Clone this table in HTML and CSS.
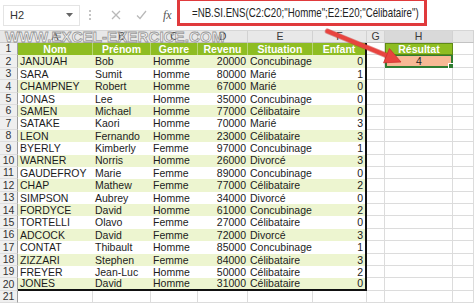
FILE: index.html
```html
<!DOCTYPE html>
<html lang="fr">
<head>
<meta charset="utf-8">
<title>NB.SI.ENS</title>
<link rel="stylesheet" href="styles.css">
</head>
<body>
<div class="app">
  <div class="fbar">
    <div class="namebox"><span class="nb-text">H2</span>
      <svg class="dd" width="7" height="4" viewBox="0 0 7 4"><path d="M0 0 H7 L3.5 4 Z" fill="#666"/></svg>
    </div>
    <div class="dots"><i></i><i></i><i></i></div>
    <div class="btns">
      <svg class="ico" width="10" height="10" viewBox="0 0 10 10"><path d="M1 1 L9 9 M9 1 L1 9" stroke="#b9b9b9" stroke-width="1.3" fill="none"/></svg>
      <svg class="ico" width="11" height="10" viewBox="0 0 11 10"><path d="M1 5.5 L4 8.5 L10 1" stroke="#b9b9b9" stroke-width="1.3" fill="none"/></svg>
      <span class="fx">fx</span>
    </div>
    <div class="formula"><span class="ftext">=NB.SI.ENS(C2:C20;"Homme";E2:E20;"Célibataire")</span></div>
  </div>

  <div class="sheet">
    <div class="row"><div class="corner"></div><div class="ch">A</div><div class="ch">B</div><div class="ch">C</div><div class="ch">D</div><div class="ch">E</div><div class="ch">F</div><div class="ch">G</div><div class="ch selh">H</div><div class="ch"></div></div>
    <div class="row head"><div class="n">1</div><div class="h">Nom</div><div class="h">Prénom</div><div class="h">Genre</div><div class="h">Revenu</div><div class="h">Situation</div><div class="h last">Enfant</div><div class="g"></div><div class="res">Résultat</div><div class="g"></div></div>
    <div class="row alt"><div class="n">2</div><div class="d">JANJUAH</div><div class="d">Bob</div><div class="d">Homme</div><div class="d num">20000</div><div class="d">Concubinage</div><div class="d num last">0</div><div class="g"></div><div class="sel">4<span class="handle"></span></div><div class="g"></div></div>
    <div class="row"><div class="n">3</div><div class="d">SARA</div><div class="d">Sumit</div><div class="d">Homme</div><div class="d num">80000</div><div class="d">Marié</div><div class="d num last">1</div><div class="g"></div><div class="g"></div><div class="g"></div></div>
    <div class="row alt"><div class="n">4</div><div class="d">CHAMPNEY</div><div class="d">Robert</div><div class="d">Homme</div><div class="d num">67000</div><div class="d">Marié</div><div class="d num last">0</div><div class="g"></div><div class="g"></div><div class="g"></div></div>
    <div class="row"><div class="n">5</div><div class="d">JONAS</div><div class="d">Lee</div><div class="d">Homme</div><div class="d num">35000</div><div class="d">Concubinage</div><div class="d num last">0</div><div class="g"></div><div class="g"></div><div class="g"></div></div>
    <div class="row alt"><div class="n">6</div><div class="d">SAMEN</div><div class="d">Michael</div><div class="d">Homme</div><div class="d num">77000</div><div class="d">Célibataire</div><div class="d num last">0</div><div class="g"></div><div class="g"></div><div class="g"></div></div>
    <div class="row"><div class="n">7</div><div class="d">SATAKE</div><div class="d">Kaori</div><div class="d">Homme</div><div class="d num">70000</div><div class="d">Marié</div><div class="d num last">3</div><div class="g"></div><div class="g"></div><div class="g"></div></div>
    <div class="row alt"><div class="n">8</div><div class="d">LEON</div><div class="d">Fernando</div><div class="d">Homme</div><div class="d num">23000</div><div class="d">Célibataire</div><div class="d num last">3</div><div class="g"></div><div class="g"></div><div class="g"></div></div>
    <div class="row"><div class="n">9</div><div class="d">BYERLY</div><div class="d">Kimberly</div><div class="d">Femme</div><div class="d num">97000</div><div class="d">Concubinage</div><div class="d num last">1</div><div class="g"></div><div class="g"></div><div class="g"></div></div>
    <div class="row alt"><div class="n">10</div><div class="d">WARNER</div><div class="d">Norris</div><div class="d">Homme</div><div class="d num">26000</div><div class="d">Divorcé</div><div class="d num last">3</div><div class="g"></div><div class="g"></div><div class="g"></div></div>
    <div class="row"><div class="n">11</div><div class="d">GAUDEFROY</div><div class="d">Marie</div><div class="d">Femme</div><div class="d num">89000</div><div class="d">Concubinage</div><div class="d num last">0</div><div class="g"></div><div class="g"></div><div class="g"></div></div>
    <div class="row alt"><div class="n">12</div><div class="d">CHAP</div><div class="d">Mathew</div><div class="d">Femme</div><div class="d num">77000</div><div class="d">Célibataire</div><div class="d num last">2</div><div class="g"></div><div class="g"></div><div class="g"></div></div>
    <div class="row"><div class="n">13</div><div class="d">SIMPSON</div><div class="d">Aubrey</div><div class="d">Homme</div><div class="d num">34000</div><div class="d">Divorcé</div><div class="d num last">0</div><div class="g"></div><div class="g"></div><div class="g"></div></div>
    <div class="row alt"><div class="n">14</div><div class="d">FORDYCE</div><div class="d">David</div><div class="d">Homme</div><div class="d num">61000</div><div class="d">Concubinage</div><div class="d num last">2</div><div class="g"></div><div class="g"></div><div class="g"></div></div>
    <div class="row"><div class="n">15</div><div class="d">TORTELLI</div><div class="d">Olavo</div><div class="d">Femme</div><div class="d num">27000</div><div class="d">Célibataire</div><div class="d num last">0</div><div class="g"></div><div class="g"></div><div class="g"></div></div>
    <div class="row alt"><div class="n">16</div><div class="d">ADCOCK</div><div class="d">David</div><div class="d">Femme</div><div class="d num">72000</div><div class="d">Divorcé</div><div class="d num last">3</div><div class="g"></div><div class="g"></div><div class="g"></div></div>
    <div class="row"><div class="n">17</div><div class="d">CONTAT</div><div class="d">Thibault</div><div class="d">Homme</div><div class="d num">85000</div><div class="d">Concubinage</div><div class="d num last">1</div><div class="g"></div><div class="g"></div><div class="g"></div></div>
    <div class="row alt"><div class="n">18</div><div class="d">ZIZZARI</div><div class="d">Stephen</div><div class="d">Femme</div><div class="d num">84000</div><div class="d">Célibataire</div><div class="d num last">3</div><div class="g"></div><div class="g"></div><div class="g"></div></div>
    <div class="row"><div class="n">19</div><div class="d">FREYER</div><div class="d">Jean-Luc</div><div class="d">Homme</div><div class="d num">50000</div><div class="d">Célibataire</div><div class="d num last">2</div><div class="g"></div><div class="g"></div><div class="g"></div></div>
    <div class="row alt end"><div class="n">20</div><div class="d">JONES</div><div class="d">David</div><div class="d">Homme</div><div class="d num">31000</div><div class="d">Célibataire</div><div class="d num last">0</div><div class="g"></div><div class="g"></div><div class="g"></div></div>
    <div class="row"><div class="n">21</div><div class="g"></div><div class="g"></div><div class="g"></div><div class="g"></div><div class="g"></div><div class="g"></div><div class="g"></div><div class="g"></div><div class="g"></div></div>
  </div>

  <div class="watermark">WWW.EXCEL-EXERCICE.COM</div>

  <svg class="arrow" width="474" height="305" viewBox="0 0 474 305">
    <path d="M327.5 31.2 L386.9 55.6" stroke="#c92b29" stroke-width="5.5" stroke-linecap="round" fill="none" opacity="0.5"/>
    <path d="M327.5 31.2 L386.9 55.6" stroke="#e8443f" stroke-width="4" stroke-linecap="round" fill="none"/>
    <path d="M401 62 L389.4 48.6 L383.6 62.8 Z" fill="#e8443f" stroke="#cf302d" stroke-width="0.8" stroke-linejoin="round"/>
  </svg>
</div>
</body>
</html>
```

FILE: styles.css
```css
html, body {
  margin: 0;
  padding: 0;
  background: #ffffff;
}
body {
  width: 474px;
  height: 305px;
  overflow: hidden;
  font-family: "Liberation Sans", Arial, sans-serif;
  color: #1e1e1e;
}
.app {
  position: relative;
  width: 474px;
  height: 305px;
  overflow: hidden;
}

/* formula bar */
.fbar {
  height: 31px;
  display: flex;
  align-items: center;
  box-sizing: border-box;
  border-bottom: 1px solid #d6d6d6;
  background: #ffffff;
}
.namebox {
  margin-left: 3px;
  width: 77px;
  height: 21px;
  box-sizing: border-box;
  border: 1px solid #e4e4e4;
  display: flex;
  align-items: center;
  justify-content: space-between;
  padding: 0 6px 0 6px;
  font-size: 11px;
  color: #333;
}
.dots {
  width: 20px;
  display: flex;
  flex-direction: column;
  align-items: center;
  gap: 2px;
}
.dots i {
  display: block;
  width: 2px;
  height: 2px;
  background: #c4c4c4;
}
.btns {
  width: 77px;
  height: 21px;
  display: flex;
  align-items: center;
  gap: 15px;
  padding-left: 11px;
  box-sizing: border-box;
}
.fx {
  font-family: "Liberation Serif", "Times New Roman", serif;
  font-style: italic;
  font-size: 12px;
  color: #555;
  margin-left: 1px;
}
.formula {
  align-self: flex-start;
  margin-top: -2px;
  width: 250px;
  height: 28px;
  box-sizing: border-box;
  border: 3px solid #e03a3c;
  display: flex;
  align-items: center;
  padding-left: 12px;
  overflow: hidden;
  white-space: nowrap;
}
.ftext {
  font-size: 13px;
  color: #222;
  display: inline-block;
  transform: scaleX(0.745);
  transform-origin: left center;
}

/* sheet grid */
.sheet {
  display: grid;
  grid-template-columns: 18px 75px 58px 47px 50px 65px 54px 18px 68px 21px;
  grid-template-rows: 12px;
  grid-auto-rows: 12.4px;
  font-size: 10.5px;
  line-height: 1;
}
.row { display: contents; }
.row > div {
  box-sizing: border-box;
  display: flex;
  align-items: center;
  white-space: nowrap;
  overflow: hidden;
  position: relative;
}
.corner {
  background: #e6e6e6;
  border-right: 1px solid #c9c9c9;
  border-bottom: 1px solid #c9c9c9;
}
.ch {
  background: #e8e8e8;
  border-right: 1px solid #d2d2d2;
  border-bottom: 1px solid #c3c3c3;
  justify-content: center;
  color: #3a3a3a;
  font-size: 10.5px;
}
.ch.selh {
  background: #d9d9d9;
}
.n {
  background: #efefef;
  border-right: 1px solid #9e9e9e;
  border-bottom: 1px solid #dedede;
  justify-content: center;
  color: #333;
  font-size: 10.5px;
}
.g {
  border-right: 1px solid #dcdcdc;
  border-bottom: 1px solid #dcdcdc;
}
.h {
  background: #8ebd22;
  color: #ffffff;
  font-weight: bold;
  justify-content: center;
  border-right: 1px solid #b7d676;
  font-size: 10.5px;
}
.d {
  padding-left: 2px;
  color: #1c1c1c;
}
.d.num {
  justify-content: flex-end;
  padding: 0 2px 0 0;
}
.alt > .d {
  background: #edf5d0;
}
.last {
  border-right: 2px solid #111111;
}
.end > .d {
  border-bottom: 2px solid #111111;
}
.res {
  background: #8ebd22;
  color: #ffffff;
  font-weight: bold;
  justify-content: center;
  border: 1px solid #5f8a16;
  font-size: 10.5px;
}
.sel {
  background: #f7b995;
  justify-content: center;
  border: 2px solid #2f7d32;
  border-top-width: 1px;
  color: #222;
  overflow: visible !important;
}
.handle {
  position: absolute;
  right: -3px;
  bottom: -3px;
  width: 4px;
  height: 4px;
  background: #2f7d32;
  border: 1px solid #ffffff;
}

/* overlays */
.watermark {
  position: absolute;
  left: 5px;
  top: 28px;
  font-weight: bold;
  font-size: 15.2px;
  color: rgba(255, 255, 255, 0.55);
  -webkit-text-stroke: 0.8px rgba(120, 120, 120, 0.75);
  white-space: nowrap;
  pointer-events: none;
}
.arrow {
  position: absolute;
  left: 0;
  top: 0;
  pointer-events: none;
}
```
